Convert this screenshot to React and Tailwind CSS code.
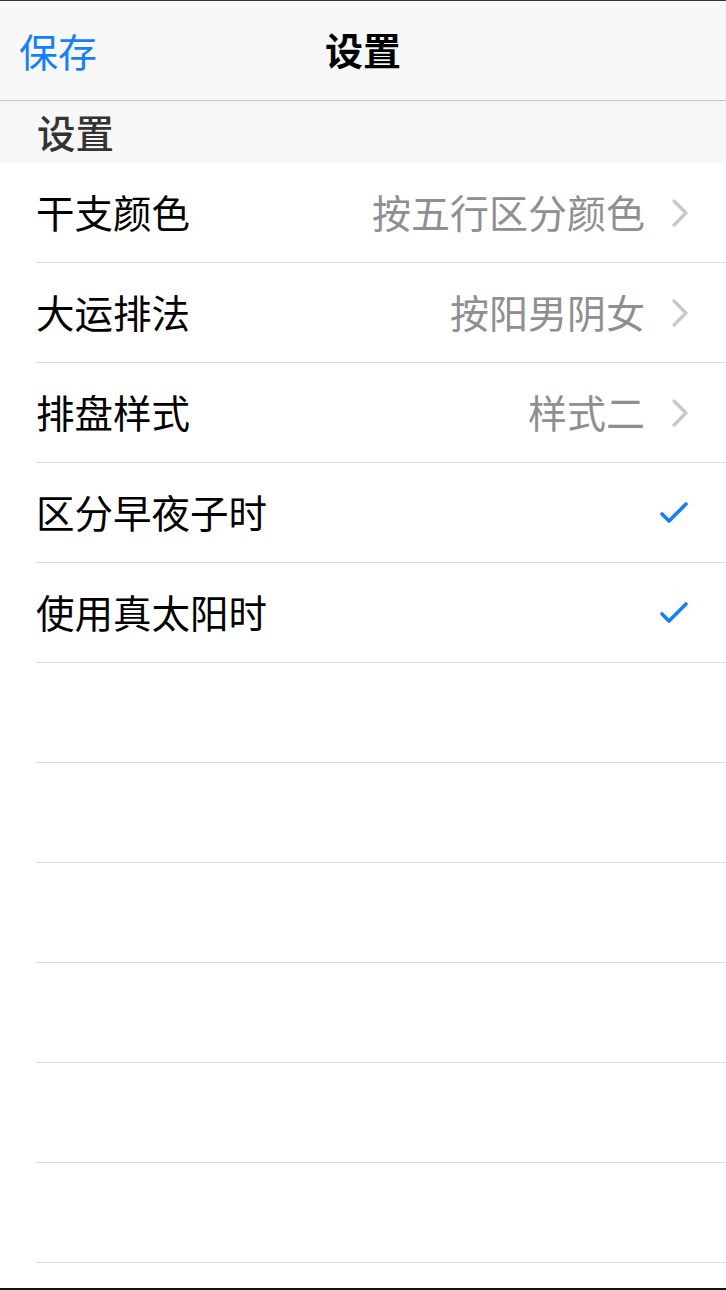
import React from "react";

const font = { fontFamily: '"Noto Sans CJK SC", "Noto Sans", sans-serif' };

function Chevron() {
  return (
    <svg width="18" height="28" viewBox="0 0 18 28" className="shrink-0">
      <path d="M3 2 L15 14 L3 26" fill="none" stroke="#c7c7cc" strokeWidth="3.2" strokeLinecap="round" strokeLinejoin="round" />
    </svg>
  );
}

function Check() {
  return (
    <svg width="30" height="24" viewBox="0 0 30 24" className="shrink-0">
      <path d="M3 13 L10 20 L27 3" fill="none" stroke="#157efb" strokeWidth="3.6" strokeLinecap="round" strokeLinejoin="round" />
    </svg>
  );
}

const rows = [
  { label: "干支颜色", value: "按五行区分颜色", type: "chevron" },
  { label: "大运排法", value: "按阳男阴女", type: "chevron" },
  { label: "排盘样式", value: "样式二", type: "chevron" },
  { label: "区分早夜子时", type: "check" },
  { label: "使用真太阳时", type: "check" },
  {}, {}, {}, {}, {}, {},
];

export default function App() {
  return (
    <div className="w-[726px] h-[1290px] bg-white flex flex-col overflow-hidden border-t border-[#333333] border-b-2 border-b-[#111111]" style={font}>
      <div className="h-[100px] shrink-0 bg-[#f8f8f8] border-b border-[#c4c4c6] relative flex items-center justify-center pb-[4px]">
        <span className="absolute left-[19px] top-[27px] text-[39px] leading-[44px] text-[#157efb]">保存</span>
        <span className="text-[38px] leading-[44px] font-semibold text-black">设置</span>
      </div>
      <div className="h-[62px] shrink-0 bg-[#f7f7f7] flex items-center pl-[37px] pb-[2px]">
        <span className="text-[38.5px] leading-[44px] font-medium text-[#333333]">设置</span>
      </div>
      <div className="flex flex-col pl-[36px]">
        {rows.map((r, i) => (
          <div key={i} className="h-[100px] shrink-0 border-b border-[#dcdcde] flex items-center pr-[37px]">
            {r.label && (
              <>
                <span className="text-[38.5px] leading-[44px] text-black pb-[4px]">{r.label}</span>
                <div className="ml-auto flex items-center gap-[26px]">
                  {r.value && <span className="text-[39px] leading-[44px] text-[#8e8e93] pb-[4px]">{r.value}</span>}
                  {r.type === "chevron" ? <Chevron /> : <Check />}
                </div>
              </>
            )}
          </div>
        ))}
      </div>
    </div>
  );
}
